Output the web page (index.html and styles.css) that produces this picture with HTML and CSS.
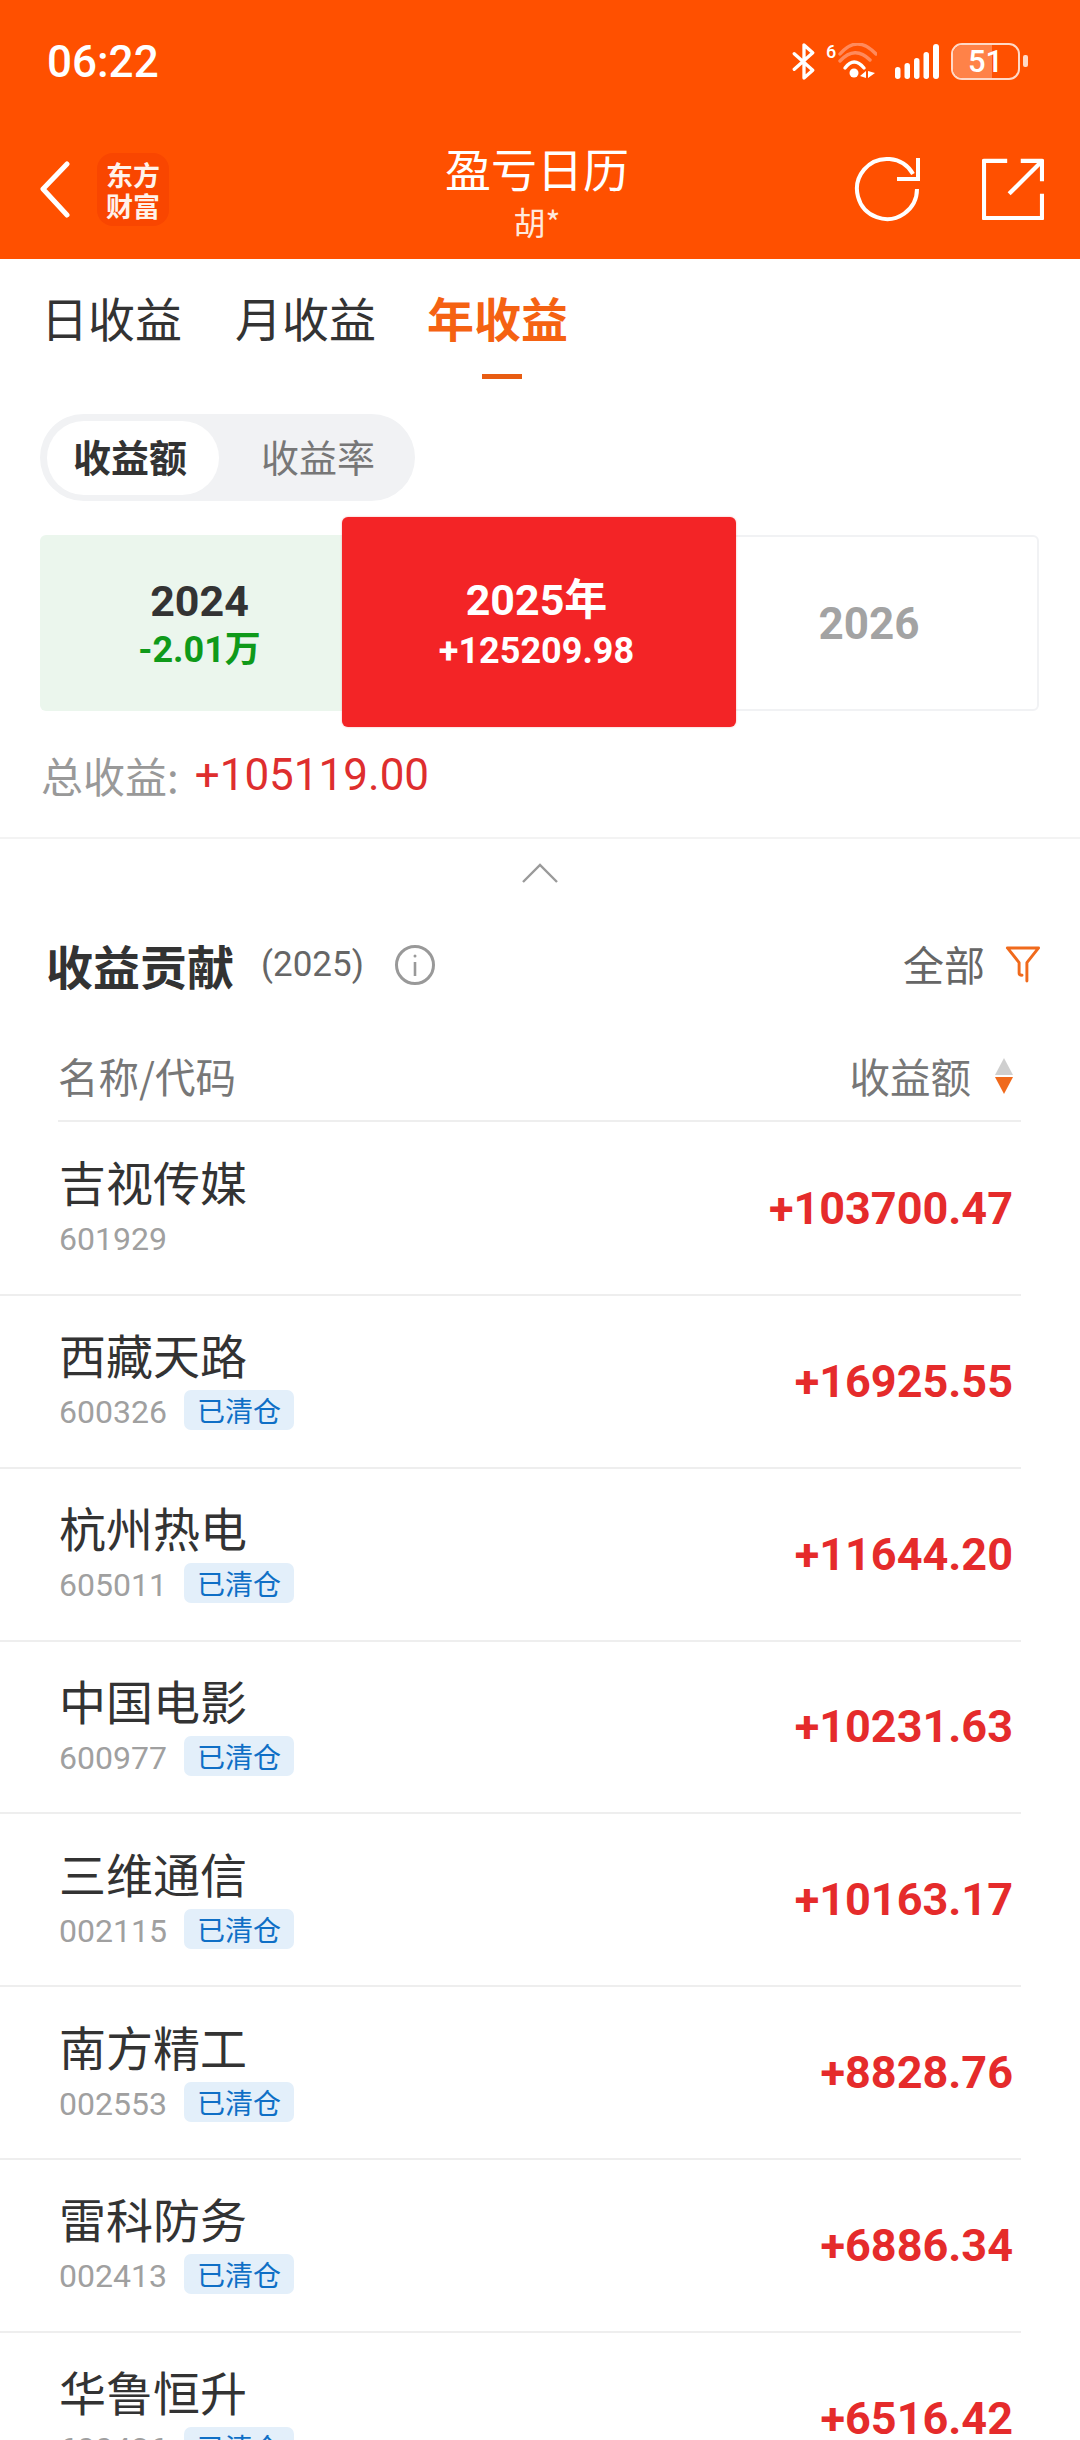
FILE: index.html
```html
<!DOCTYPE html>
<html lang="zh-CN">
<head>
<meta charset="utf-8">
<title>盈亏日历</title>
<link rel="stylesheet" href="styles.css">
</head>
<body>
<div class="phone">
  <header class="top">
    <div class="status">
      <span class="time">06:22</span>
      <div class="status-icons">
        <svg class="i-bt" width="24" height="37" viewBox="0 0 24 38" fill="none" stroke="#fff" stroke-width="3.4" stroke-linejoin="round" stroke-linecap="round"><path d="M2 27 L21 10 L12 2 L12 36 L21 28 L2 11"/></svg>
        <span class="net">6</span>
        <svg class="i-wifi" width="39" height="36" viewBox="0 0 39 36" fill="none" stroke-linecap="round"><path d="M2 11 Q19 -9 38 11" stroke="#ff8a5c" stroke-width="3.4"/><path d="M2 18 Q17 2 32 17" stroke="#ff8a5c" stroke-width="3.4"/><path d="M7 25 Q16 13 26 25" stroke="#fff" stroke-width="3.4"/><circle cx="16" cy="30" r="4.500" fill="#fff"/><path d="M22 33 L28 28 L28 35Z M30 28 L30 35 L37 30Z" fill="#fff" stroke="none"/></svg>
        <svg class="i-sig" width="44" height="36" viewBox="0 0 44 36"><rect x="0" y="24" width="5.500" height="12" rx="2.700" fill="#fff"/><rect x="9.500" y="20" width="5.500" height="16" rx="2.700" fill="#fff"/><rect x="19" y="15" width="5.500" height="21" rx="2.700" fill="#fff"/><rect x="28.500" y="9" width="5.500" height="27" rx="2.700" fill="#fff"/><rect x="38" y="1" width="6" height="35" rx="3" fill="#fff"/></svg>
        <div class="batt"><div class="batt-body"><div class="batt-fill"></div><span class="batt-num">51</span></div><div class="batt-tip"></div></div>
      </div>
    </div>
    <div class="nav">
      <div class="nav-left">
        <svg width="32" height="58" viewBox="0 0 32 58" fill="none" stroke="#fff" stroke-width="5" stroke-linecap="round" stroke-linejoin="round"><path d="M28 3 L4 28 L28 54"/></svg>
        <div class="logo"><span>东方</span><span>财富</span></div>
      </div>
      <div class="nav-title"><div class="title">盈亏日历</div><div class="sub">胡*</div></div>
      <div class="nav-right">
        <svg width="66" height="66" viewBox="0 0 66 66" fill="none" stroke="#fff" stroke-width="4"><path d="M63 33 A30 30 0 1 1 59 18"/><path d="M64 2 V23 H43"/></svg>
        <svg width="62" height="62" viewBox="0 0 64 64" fill="none" stroke="#fff" stroke-width="4.400" stroke-linejoin="round"><path d="M26 3 H2 V62 H62 V37"/><path d="M62 24 V3 H40"/><path d="M62 3 L28 37"/></svg>
      </div>
    </div>
  </header>

  <nav class="tabs">
    <span class="tab">日收益</span>
    <span class="tab">月收益</span>
    <span class="tab active">年收益</span>
  </nav>

  <div class="seg"><span class="seg-item on">收益额</span><span class="seg-item">收益率</span></div>

  <div class="years">
    <div class="y y-prev"><b class="y-name">2024</b><b class="y-val">-2.01万</b></div>
    <div class="y y-next"><b>2026</b></div>
    <div class="y-cur"><b class="cur-name">2025年</b><b class="cur-val">+125209.98</b></div>
  </div>

  <div class="total"><span class="total-l">总收益:</span><span class="total-v">+105119.00</span></div>

  <div class="collapse"><svg width="36" height="20" viewBox="0 0 36 20" fill="none" stroke="#9a9a9a" stroke-width="2.400"><path d="M1 19 L18 2 L35 19"/></svg></div>

  <section class="contrib">
    <div class="c-head">
      <div class="c-left">
        <h2>收益贡献</h2><span class="c-year">(2025)</span>
        <svg width="42" height="42" viewBox="0 0 42 42" fill="none" stroke="#999" stroke-width="3"><circle cx="21" cy="21" r="18.500"/><path d="M21 18 V32" stroke-width="2.600"/><circle cx="21" cy="12" r="1.500" fill="#999" stroke="none"/></svg>
      </div>
      <div class="c-right"><span class="c-all">全部</span>
        <svg width="36" height="37" viewBox="0 0 36 38" fill="none" stroke="#f06a1c" stroke-width="3" stroke-linejoin="round" stroke-linecap="round"><path d="M2 2 H34 L22 17 V36 M14 28 V17 L2 2 M14 28 Q14 30 17 30"/></svg>
      </div>
    </div>
    <div class="t-head"><span>名称/代码</span><span class="t-sort">收益额<i class="sort"><i class="up"></i><i class="down"></i></i></span></div>
    <div class="rows">
      <div class="row"><div class="r-l"><div class="r-name">吉视传媒</div><div class="r-code"><span>601929</span></div></div><div class="r-v">+103700.47</div></div>
      <div class="row"><div class="r-l"><div class="r-name">西藏天路</div><div class="r-code"><span>600326</span><em>已清仓</em></div></div><div class="r-v">+16925.55</div></div>
      <div class="row"><div class="r-l"><div class="r-name">杭州热电</div><div class="r-code"><span>605011</span><em>已清仓</em></div></div><div class="r-v">+11644.20</div></div>
      <div class="row"><div class="r-l"><div class="r-name">中国电影</div><div class="r-code"><span>600977</span><em>已清仓</em></div></div><div class="r-v">+10231.63</div></div>
      <div class="row"><div class="r-l"><div class="r-name">三维通信</div><div class="r-code"><span>002115</span><em>已清仓</em></div></div><div class="r-v">+10163.17</div></div>
      <div class="row"><div class="r-l"><div class="r-name">南方精工</div><div class="r-code"><span>002553</span><em>已清仓</em></div></div><div class="r-v">+8828.76</div></div>
      <div class="row"><div class="r-l"><div class="r-name">雷科防务</div><div class="r-code"><span>002413</span><em>已清仓</em></div></div><div class="r-v">+6886.34</div></div>
      <div class="row"><div class="r-l"><div class="r-name">华鲁恒升</div><div class="r-code"><span>600426</span><em>已清仓</em></div></div><div class="r-v">+6516.42</div></div>
    </div>
  </section>
</div>
</body>
</html>
```
FILE: styles.css
```css
* { box-sizing: border-box; }
html, body { margin: 0; padding: 0; background: #fff; }
body { font-family: "Noto Sans CJK SC", "Roboto", sans-serif; color: #333; }
.phone { width: 1080px; height: 2440px; overflow: hidden; background: #fff; }
.top { height: 259px; background: #ff5000; color: #fff; }
.status { height: 124px; display: flex; justify-content: space-between; align-items: center; padding: 0 52px 2px 47px; }
.time { font: 500 44px/1 "Roboto", sans-serif; margin-top: 2px; }
.status-icons { display: flex; align-items: center; height: 37px; }
.i-bt { margin-right: 10px; }
.net { font: 500 18px/1 "Roboto", sans-serif; align-self: flex-start; width: 10px; }
.i-wifi { margin: 0 18px 0 2px; }
.i-sig { margin-right: 12px; }
.batt { display: flex; align-items: center; gap: 3px; }
.batt-body { position: relative; width: 69px; height: 37px; border: 2px solid #ffd9c7; border-radius: 11px; overflow: hidden; display: flex; align-items: center; justify-content: center; }
.batt-fill { position: absolute; left: 0; top: 0; bottom: 0; width: 60%; background: #ff8248; }
.batt-num { position: relative; font: 500 31px/1 "Roboto", sans-serif; color: #fff; }
.batt-tip { width: 5px; height: 12px; border-radius: 2px; background: #ffd9c7; }
.nav { height: 135px; display: flex; align-items: flex-start; justify-content: space-between; position: relative; padding: 0 36px 0 39px; }
.nav-left { display: flex; align-items: center; gap: 26px; margin-top: 29px; }
.logo { width: 72px; height: 73px; border-radius: 16px; background: #f94600; display: flex; flex-direction: column; align-items: center; justify-content: center; font-weight: 700; font-size: 27px; line-height: 31px; color: #fff2ea; }
.nav-title { position: absolute; left: 0; right: 6px; top: 18px; text-align: center; }
.title { font-size: 46px; line-height: 50px; }
.sub { font-size: 32px; line-height: 38px; margin-top: 10px; color: #ffe9dc; }
.nav-right { display: flex; gap: 62px; align-items: center; margin-top: 32px; }
.tabs { display: flex; padding: 28px 0 0 41px; height: 116px; font-size: 47px; line-height: 60px; align-items: flex-start; }
.tab { color: #333; position: relative; height: 60px; margin-right: 53px; }
.tab + .tab { margin-right: 51px; }
.tab.active { color: #f56212; font-weight: 700; }
.tab.active::after { content: ""; position: absolute; left: 55px; bottom: -32px; width: 40px; height: 5px; background: #e85c12; }
.seg { margin: 39px 0 0 40px; width: 375px; height: 87px; background: #f1f2f4; border-radius: 44px; padding: 6px 7px; display: flex; align-items: center; }
.seg-item { height: 74px; display: flex; align-items: center; justify-content: center; font-size: 38px; color: #777; padding-bottom: 4px; }
.seg-item.on { width: 172px; padding-right: 6px; background: #fff; border-radius: 37px; color: #333; font-weight: 700; }
.seg-item:last-child { margin-left: 42px; }
.years { position: relative; margin: 34px 41px 0 40px; height: 176px; display: flex; justify-content: space-between; }
.y { width: 400px; height: 176px; border-radius: 6px; display: flex; flex-direction: column; align-items: center; justify-content: center; font-family: "Roboto", "Noto Sans CJK SC", sans-serif; }
.y-prev { background: #ebf6ed; padding-right: 81px; padding-top: 3px; }
.y-name { font-size: 43px; line-height: 50px; color: #333; }
.y-val { font-size: 36px; line-height: 48px; color: #0f9a1a; }
.y-next { background: #fff; border: 2px solid #f1f2f4; padding-left: 60px; padding-top: 2px; font-size: 44px; color: #a3a3a3; }
.y-cur { position: absolute; left: 302px; top: -18px; width: 394px; height: 210px; border-radius: 6px; background: #f32426; color: #fff; display: flex; flex-direction: column; align-items: center; padding: 58px 5px 0 0; font-family: "Roboto", "Noto Sans CJK SC", sans-serif; box-shadow: 0 0 2px rgba(243,36,38,.4); }
.cur-name { font-size: 43px; line-height: 50px; }
.cur-val { font-size: 36px; line-height: 52px; }
.total { margin: 37px 0 0 41px; height: 54px; line-height: 54px; display: flex; gap: 16px; }
.total-l { color: #999; font-size: 42px; }
.total-v { color: #de2e2e; font-family: "Roboto", sans-serif; font-size: 44px; }
.collapse { margin-top: 35px; border-top: 2px solid #f3f3f3; height: 46px; display: flex; justify-content: center; align-items: flex-start; padding-top: 24px; }
.c-head { display: flex; justify-content: space-between; align-items: center; padding: 0 39px 0 46px; height: 65px; margin-top: 49px; }
.c-left { display: flex; align-items: center; }
.c-left h2 { margin: 0; font-size: 47px; font-weight: 700; line-height: 60px; color: #333; }
.c-year { font: 400 35px/1 "Roboto", sans-serif; color: #666; margin: 0 30px 0 27px; }
.c-right { display: flex; align-items: center; gap: 20px; font-size: 41px; color: #666; }
.c-all { margin-top: -3px; }
.t-head { margin: 25px 59px 0 58px; height: 100px; padding: 9px 8px 0 0; border-bottom: 2px solid #eee; display: flex; justify-content: space-between; align-items: center; font-size: 40.5px; color: #777; }
.t-sort { display: flex; align-items: center; gap: 24px; }
.sort { display: flex; flex-direction: column; gap: 2px; }
.sort i { display: block; width: 0; height: 0; border-left: 9px solid transparent; border-right: 9px solid transparent; }
.sort .up { border-bottom: 17px solid #cfcfcf; }
.sort .down { border-top: 17px solid #f06a1c; }
.row { height: 172.8px; margin-right: 59px; border-bottom: 2px solid #eee; display: flex; justify-content: space-between; align-items: center; padding: 0 8px 0 59px; }
.row:first-child { height: 174px; }
.r-l { padding-bottom: 9px; }
.r-name { font-size: 47px; line-height: 62px; color: #333; }
.r-code { display: flex; align-items: center; gap: 17px; height: 40px; margin-top: 5px; }
.r-code span { font: 400 32px/1 "Roboto", sans-serif; color: #a0a0a0; padding-top: 4px; }
.r-code em { font-style: normal; font-size: 28px; line-height: 40px; width: 110px; height: 40px; text-align: center; background: #e3effa; color: #0f6fc6; border-radius: 7px; }
.r-v { font: 700 45px/1 "Roboto", sans-serif; color: #e52b2b; }
```
